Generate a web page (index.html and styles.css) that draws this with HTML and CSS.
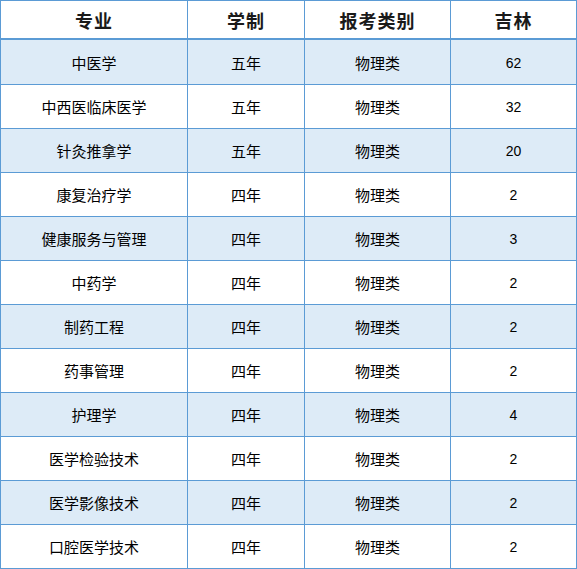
FILE: index.html
```html
<!DOCTYPE html>
<html lang="zh-CN">
<head>
<meta charset="utf-8">
<title>招生计划</title>
<link rel="stylesheet" href="styles.css">
</head>
<body>
<table class="plan">
  <colgroup>
    <col class="c1"><col class="c2"><col class="c3"><col class="c4">
  </colgroup>
  <thead>
    <tr><th>专业</th><th>学制</th><th>报考类别</th><th>吉林</th></tr>
  </thead>
  <tbody>
    <tr class="alt"><td>中医学</td><td>五年</td><td>物理类</td><td class="num">62</td></tr>
    <tr><td>中西医临床医学</td><td>五年</td><td>物理类</td><td class="num">32</td></tr>
    <tr class="alt"><td>针灸推拿学</td><td>五年</td><td>物理类</td><td class="num">20</td></tr>
    <tr><td>康复治疗学</td><td>四年</td><td>物理类</td><td class="num">2</td></tr>
    <tr class="alt"><td>健康服务与管理</td><td>四年</td><td>物理类</td><td class="num">3</td></tr>
    <tr><td>中药学</td><td>四年</td><td>物理类</td><td class="num">2</td></tr>
    <tr class="alt"><td>制药工程</td><td>四年</td><td>物理类</td><td class="num">2</td></tr>
    <tr><td>药事管理</td><td>四年</td><td>物理类</td><td class="num">2</td></tr>
    <tr class="alt"><td>护理学</td><td>四年</td><td>物理类</td><td class="num">4</td></tr>
    <tr><td>医学检验技术</td><td>四年</td><td>物理类</td><td class="num">2</td></tr>
    <tr class="alt"><td>医学影像技术</td><td>四年</td><td>物理类</td><td class="num">2</td></tr>
    <tr><td>口腔医学技术</td><td>四年</td><td>物理类</td><td class="num">2</td></tr>
  </tbody>
</table>
</body>
</html>
```

FILE: styles.css
```css
html, body {
  margin: 0;
  padding: 0;
  background: #ffffff;
}

.plan {
  table-layout: fixed;
  width: 577px;
  border-collapse: separate;
  border-spacing: 0;
  border-top: 1px solid #5b9bd5;
  border-left: 1px solid #5b9bd5;
  font-family: "Noto Sans CJK SC", "Liberation Sans", sans-serif;
  color: #000000;
}

.c1 { width: 187px; }
.c2 { width: 117px; }
.c3 { width: 146px; }
.c4 { width: 126px; }

.plan th,
.plan td {
  padding: 0;
  text-align: center;
  vertical-align: middle;
  border-right: 1px solid #5b9bd5;
  border-bottom: 1px solid #5b9bd5;
  box-sizing: content-box;
}

.plan th {
  height: 37px;
  border-bottom-width: 2px;
  font-size: 18px;
  font-weight: 700;
  color: #1a1a1a;
  letter-spacing: 1px;
  line-height: 20px;
}

.plan td {
  height: 43px;
  font-size: 15px;
  line-height: 17px;
  font-weight: 400;
}

.plan tbody tr:first-child td {
  height: 44px;
}

.plan tr.alt td {
  background: #ddebf7;
}

.plan td.num {
  font-family: "Liberation Sans", "DejaVu Sans", sans-serif;
  font-size: 14px;
  padding-top: 2px;
  height: 41px;
}

.plan tbody tr:first-child td.num {
  height: 42px;
}
```
